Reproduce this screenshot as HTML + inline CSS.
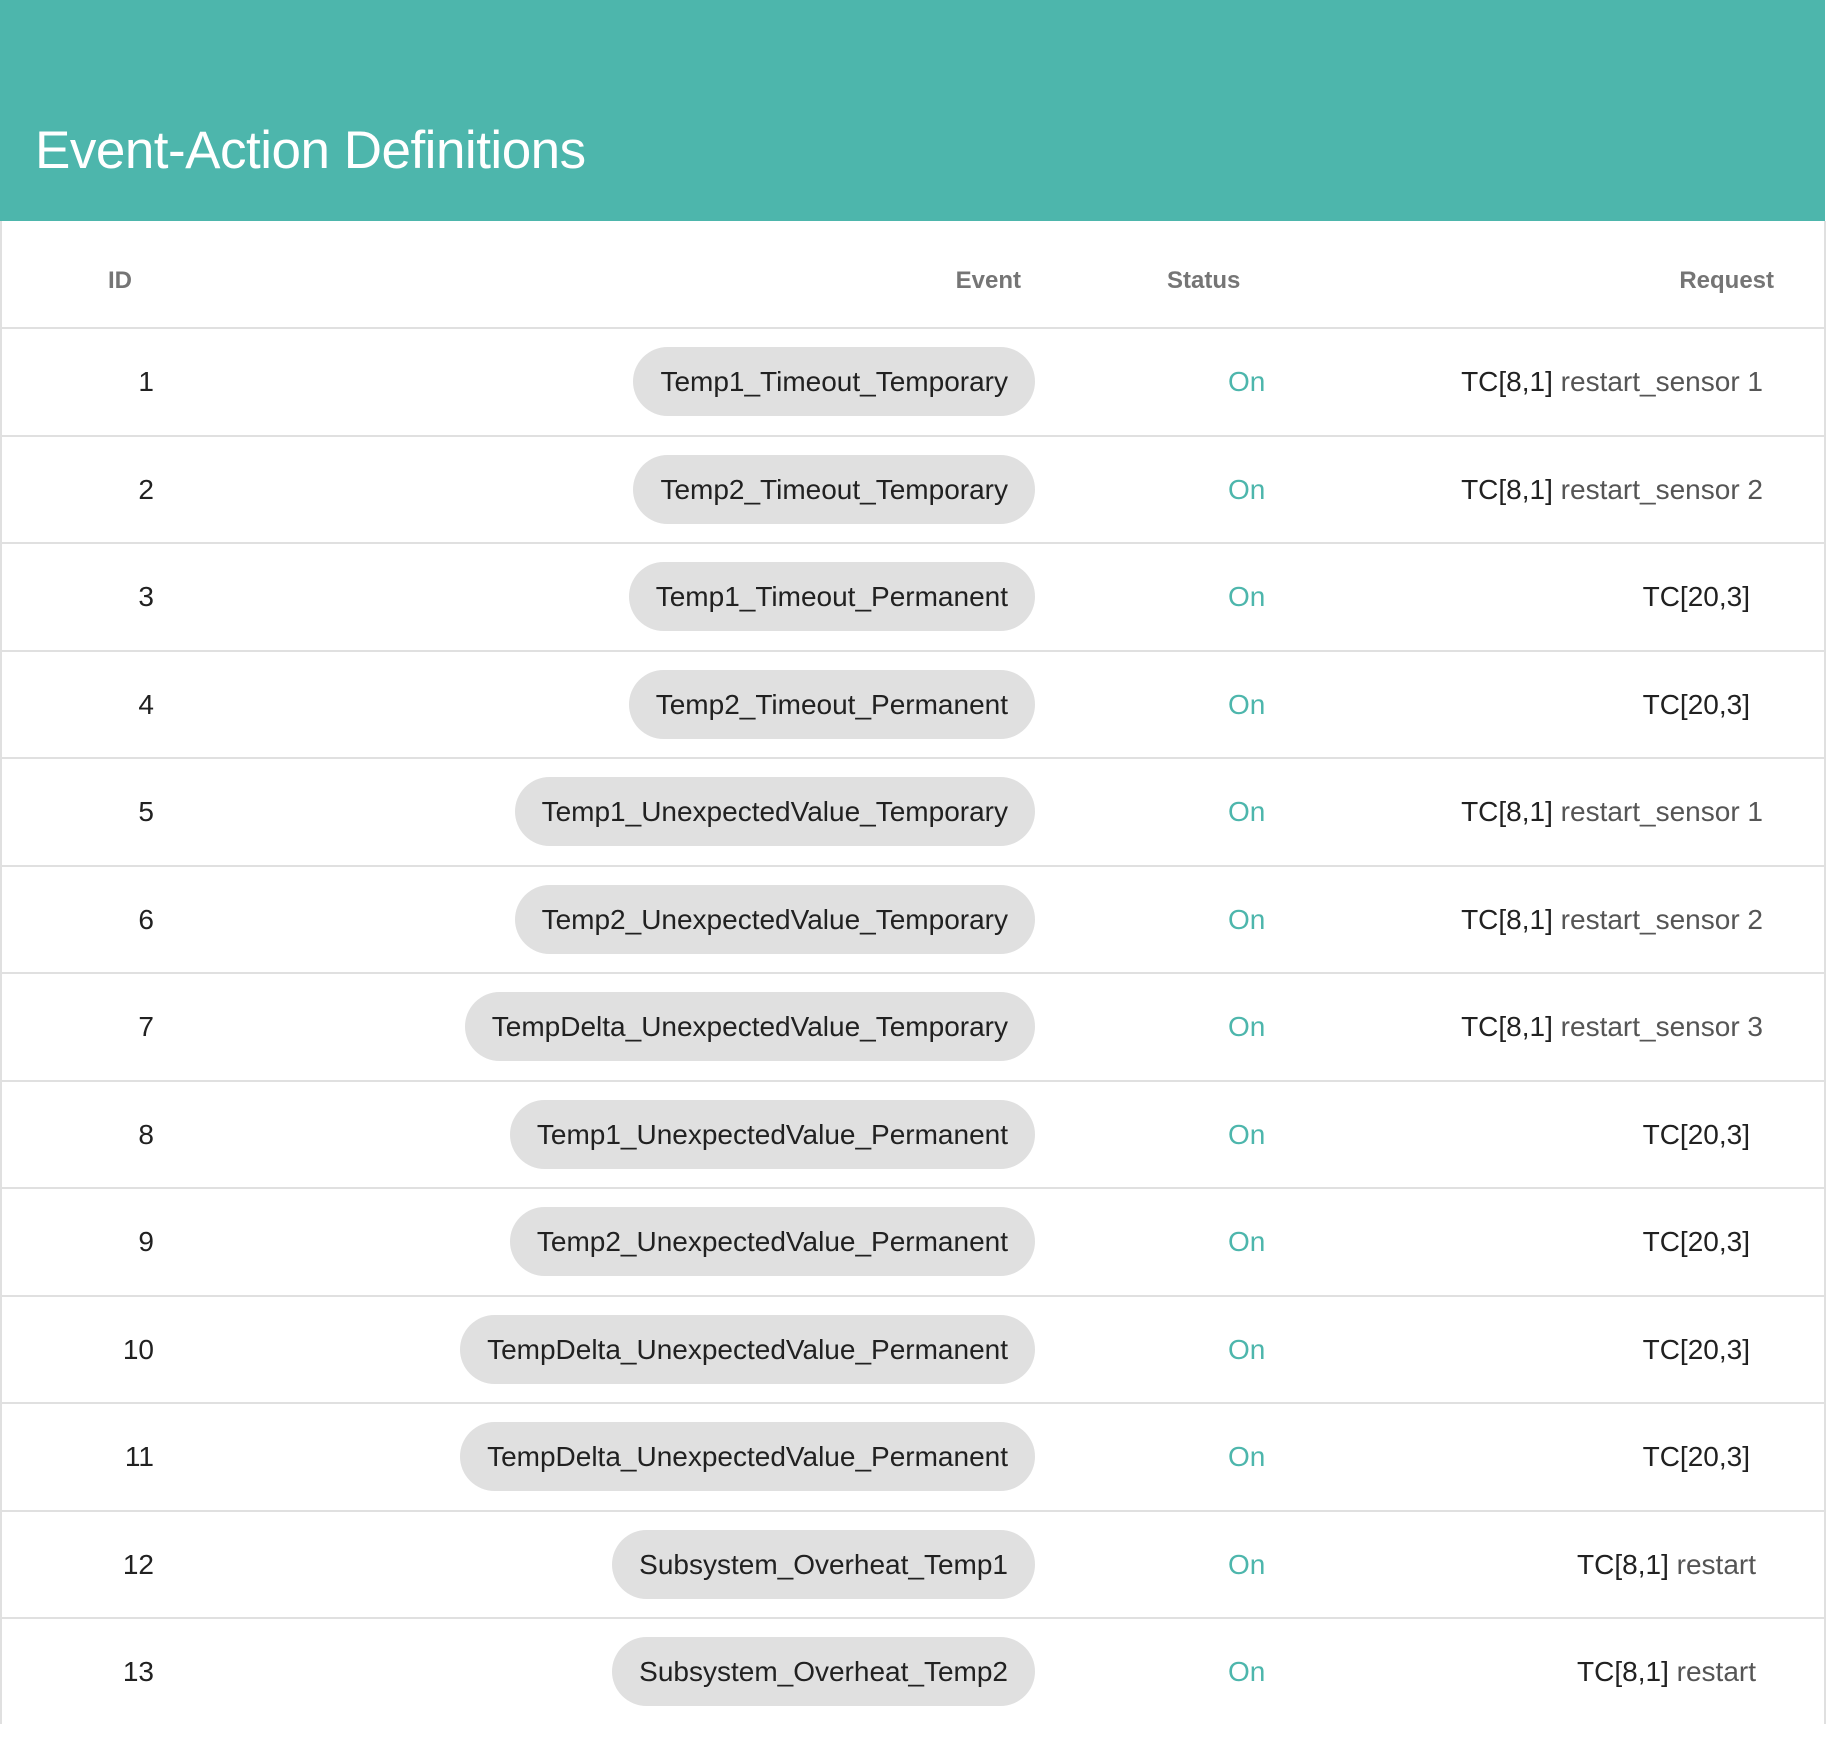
<!DOCTYPE html>
<html><head><meta charset="utf-8"><style>
*{margin:0;padding:0;box-sizing:border-box}
body{width:1836px;height:1741px;background:#fff;font-family:"Liberation Sans",sans-serif;position:relative;overflow:hidden}
.hdr{position:absolute;left:0;top:0;width:1825px;height:221px;background:#4db6ac}
.hdr h1{position:absolute;left:35px;top:120px;font-size:53px;font-weight:normal;color:#fff;letter-spacing:-0.5px}
.tbl{position:absolute;left:0;top:221px;width:1826px;height:1503px;border-left:2px solid #e0e0e0;border-right:2px solid #e0e0e0}
.th{position:absolute;top:267px;font-size:24px;font-weight:bold;color:#757575}
.row{position:absolute;left:0;width:1826px;height:107.5px;border-top:2px solid #e0e0e0}
.id{position:absolute;right:1672px;top:37px;font-size:28px;color:#212121}
.pill{position:absolute;right:791px;top:18px;height:69px;line-height:69px;padding:0 27px;border-radius:35px;background:#e0e0e0;font-size:28px;color:#212121;white-space:nowrap}
.on{position:absolute;left:1228px;top:37px;font-size:28px;color:#4db6ac}
.rq{position:absolute;right:63px;top:37px;font-size:28px;color:#212121;white-space:nowrap}
.rq span{color:#555}
.rq.s{right:76px}
</style></head><body>
<div class="hdr"><h1>Event-Action Definitions</h1></div>
<div class="tbl"></div>
<div class="th" style="left:108px">ID</div>
<div class="th" style="right:815px">Event</div>
<div class="th" style="left:1167px">Status</div>
<div class="th" style="right:62px">Request</div>

<div class="row" style="top:327px"><div class="id">1</div><div class="pill">Temp1_Timeout_Temporary</div><div class="on">On</div><div class="rq">TC[8,1] <span>restart_sensor 1</span></div></div>
<div class="row" style="top:434.5px"><div class="id">2</div><div class="pill">Temp2_Timeout_Temporary</div><div class="on">On</div><div class="rq">TC[8,1] <span>restart_sensor 2</span></div></div>
<div class="row" style="top:542px"><div class="id">3</div><div class="pill">Temp1_Timeout_Permanent</div><div class="on">On</div><div class="rq s">TC[20,3]</div></div>
<div class="row" style="top:649.5px"><div class="id">4</div><div class="pill">Temp2_Timeout_Permanent</div><div class="on">On</div><div class="rq s">TC[20,3]</div></div>
<div class="row" style="top:757px"><div class="id">5</div><div class="pill">Temp1_UnexpectedValue_Temporary</div><div class="on">On</div><div class="rq">TC[8,1] <span>restart_sensor 1</span></div></div>
<div class="row" style="top:864.5px"><div class="id">6</div><div class="pill">Temp2_UnexpectedValue_Temporary</div><div class="on">On</div><div class="rq">TC[8,1] <span>restart_sensor 2</span></div></div>
<div class="row" style="top:972px"><div class="id">7</div><div class="pill">TempDelta_UnexpectedValue_Temporary</div><div class="on">On</div><div class="rq">TC[8,1] <span>restart_sensor 3</span></div></div>
<div class="row" style="top:1079.5px"><div class="id">8</div><div class="pill">Temp1_UnexpectedValue_Permanent</div><div class="on">On</div><div class="rq s">TC[20,3]</div></div>
<div class="row" style="top:1187px"><div class="id">9</div><div class="pill">Temp2_UnexpectedValue_Permanent</div><div class="on">On</div><div class="rq s">TC[20,3]</div></div>
<div class="row" style="top:1294.5px"><div class="id">10</div><div class="pill">TempDelta_UnexpectedValue_Permanent</div><div class="on">On</div><div class="rq s">TC[20,3]</div></div>
<div class="row" style="top:1402px"><div class="id">11</div><div class="pill">TempDelta_UnexpectedValue_Permanent</div><div class="on">On</div><div class="rq s">TC[20,3]</div></div>
<div class="row" style="top:1509.5px"><div class="id">12</div><div class="pill">Subsystem_Overheat_Temp1</div><div class="on">On</div><div class="rq" style="right:70px">TC[8,1] <span>restart</span></div></div>
<div class="row" style="top:1617px"><div class="id">13</div><div class="pill">Subsystem_Overheat_Temp2</div><div class="on">On</div><div class="rq" style="right:70px">TC[8,1] <span>restart</span></div></div>
</body></html>
